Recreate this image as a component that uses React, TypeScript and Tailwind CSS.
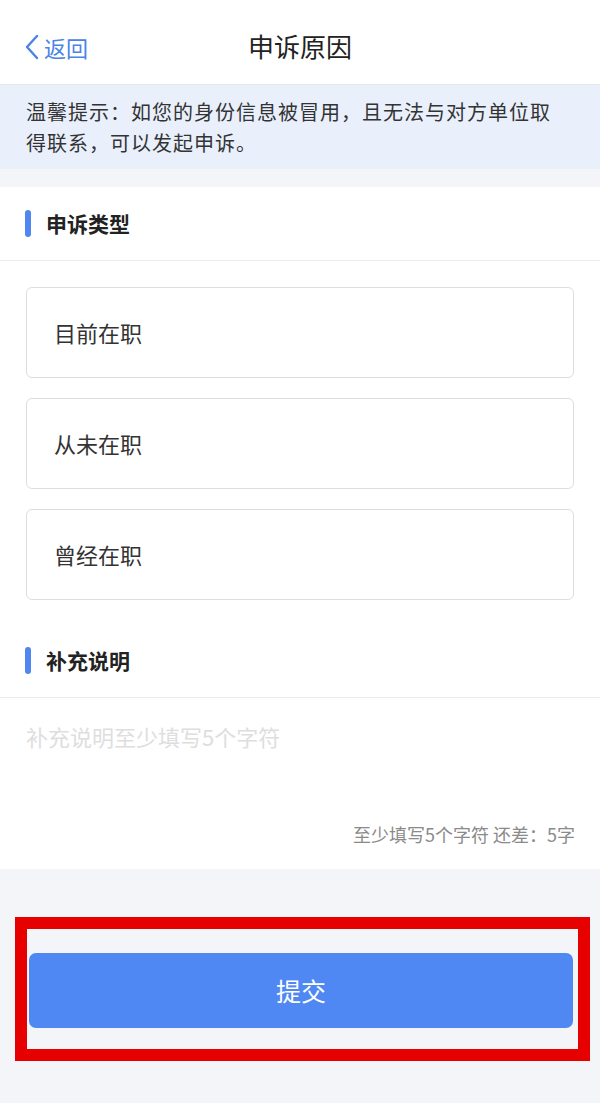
import React from 'react'

const font = { fontFamily: '"Noto Sans CJK SC", "Noto Sans", sans-serif' }

function SectionTitle({ title }: { title: string }) {
  return (
    <div className="flex h-[74px] items-center border-b border-[#ebebeb] bg-white px-[25px]">
      <span className="h-[27px] w-[6px] rounded-full bg-[#4f86ef]" />
      <span className="ml-[15px] text-[21px] font-bold text-[#222]">{title}</span>
    </div>
  )
}

export default function App() {
  const options = ['目前在职', '从未在职', '曾经在职']

  return (
    <div className="min-h-[1103px] w-[600px] bg-[#f4f5f8]" style={font}>
      <div className="relative flex h-[85px] items-center justify-center border-b border-[#e6e6e6] bg-white">
        <div className="absolute left-[24px] top-[33px] flex items-center text-[#4a84e6]">
          <svg width="16" height="28" viewBox="0 0 16 28" fill="none">
            <path d="M13 3 L3 14 L13 25" stroke="currentColor" strokeWidth="2.4" strokeLinecap="round" strokeLinejoin="round" />
          </svg>
          <span className="ml-[4px] text-[22px] leading-[28px]">返回</span>
        </div>
        <div className="pt-[6px] text-[26px] text-[#222]">申诉原因</div>
      </div>

      <div className="bg-[#e9f0fc] py-[11px] pl-[26px] pr-[39px] text-[20px] leading-[31px] tracking-[1px] text-[#333]">
        温馨提示：如您的身份信息被冒用，且无法与对方单位取得联系，可以发起申诉。
      </div>

      <div className="h-[18px] bg-[#f4f5f8]" />

      <SectionTitle title="申诉类型" />
      <div className="flex flex-col gap-[20px] bg-white px-[26px] pb-[24px] pt-[26px]">
        {options.map((o) => (
          <div
            key={o}
            className="flex h-[91px] items-center rounded-[6px] border border-[#dedede] pl-[27px] text-[22px] text-[#333]"
          >
            {o}
          </div>
        ))}
      </div>

      <SectionTitle title="补充说明" />
      <div className="relative h-[171px] bg-white">
        <textarea
          className="h-[110px] w-full resize-none bg-transparent px-[26px] pt-[22px] text-[22px] leading-[32px] text-[#333] outline-none placeholder:text-[#dedede]"
          placeholder="补充说明至少填写5个字符"
          style={font}
        />
        <div className="absolute bottom-[21px] right-[25px] text-[18px] text-[#8a8a8a]">
          至少填写5个字符 还差：5字
        </div>
      </div>

      <div className="pt-[48px]">
        <div className="ml-[15px] w-[575px] border-[12px] border-[#e60000] pb-[21px] pl-[2px] pr-[5px] pt-[24px]">
          <button className="flex h-[75px] w-full items-center justify-center rounded-[7px] bg-[#4f87f3] text-[25px] text-white">
            提交
          </button>
        </div>
      </div>
    </div>
  )
}
